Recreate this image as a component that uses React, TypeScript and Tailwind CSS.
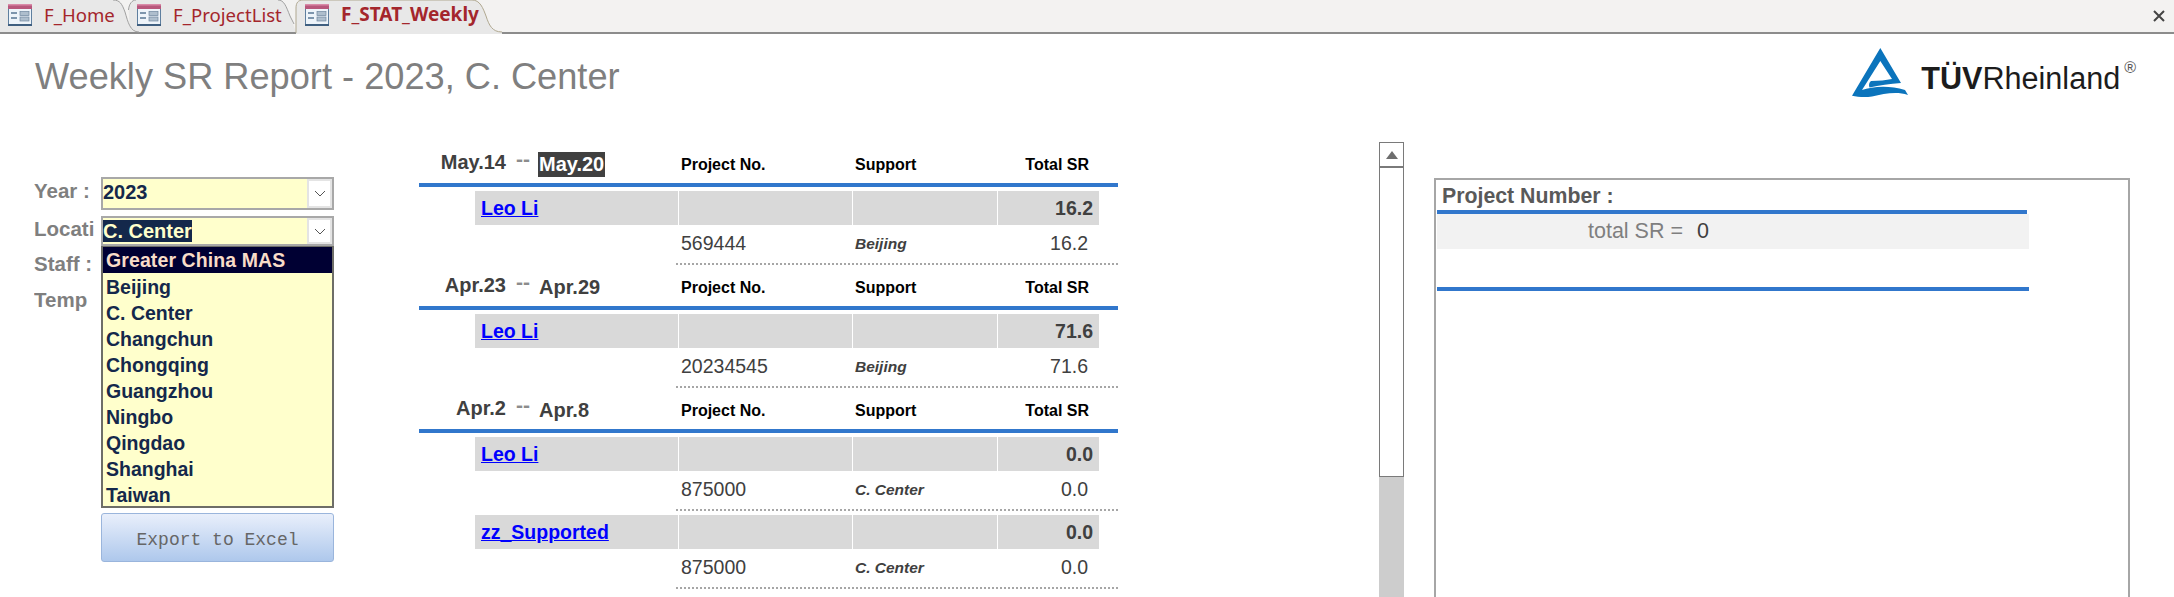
import React from "react";

const arial = "font-['Liberation_Sans',Arial,sans-serif]";

function FormIcon() {
  return (
    <svg width="24" height="22" viewBox="0 0 24 22" className="shrink-0">
      <rect x="0.5" y="0.5" width="23" height="21" fill="#eef4fa" stroke="#5f7f9f" />
      <rect x="0" y="0" width="24" height="5" fill="#b8577c" />
      <rect x="0" y="0" width="24" height="1.5" fill="#d98aa8" />
      <rect x="0" y="20" width="24" height="2" fill="#3f5f80" />
      <rect x="3" y="8" width="6" height="2" fill="#7d95ad" />
      <rect x="3" y="13" width="6" height="2" fill="#7d95ad" />
      <rect x="12" y="7.5" width="9" height="4" fill="#aebecd" stroke="#6f879f" strokeWidth="0.7" />
      <rect x="12" y="13" width="9" height="4" fill="#aebecd" stroke="#6f879f" strokeWidth="0.7" />
    </svg>
  );
}

function Tab({ label, bold, width, iconLeft }: { label: string; bold?: boolean; width: number; iconLeft: number }) {
  return (
    <div
      className="relative z-10 flex h-[32px] items-center gap-[12px] pb-[3px] font-['Noto_Sans',sans-serif] text-[#a4262c]"
      style={{ width, paddingLeft: iconLeft }}
    >
      <FormIcon />
      <span className={bold ? "text-[19px] font-bold" : "text-[18.600px]"}>{label}</span>
    </div>
  );
}

function TabBar() {
  return (
    <div className="relative flex h-[34px] shrink-0 border-b-2 border-[#8c8c8c] bg-[#f3f2f1]">
      <svg width="520" height="34" viewBox="0 0 520 34" className="absolute left-0 top-0">
        <path d="M0 0H113C120 0 122 4 125 12C128 22 130 32 139 32H0Z" fill="#e8e8e8" />
        <path d="M129 32C131 32 128 14 129 8C130 3 132 0 136 0H278C284 0 286 6 290 16L296 32Z" fill="#e8e8e8" />
        <path d="M113 0C120 0 122 4 125 12C128 22 130 32 139 32" fill="none" stroke="#a0a0a0" strokeWidth="1" />
        <path d="M136 0C132 0 129 4 128.500 10" fill="none" stroke="#a0a0a0" strokeWidth="1" />
        <path d="M278 0C284 0 286 6 290 16L294 24" fill="none" stroke="#a0a0a0" strokeWidth="1" />
        <path d="M296 34V8C296 3 298 0 303 0H472C480 0 483 8 486 16C489 25 492 32 502 32V34Z" fill="#e8e8e8" />
        <path d="M296 33V8C296 3 298 0 303 0H472C480 0 483 8 486 16C489 25 492 32 502 32" fill="none" stroke="#b0a890" strokeWidth="1" />
      </svg>
      <Tab label="F_Home" width={129} iconLeft={8} />
      <Tab label="F_ProjectList" width={167} iconLeft={8} />
      <Tab label="F_STAT_Weekly" bold width={200} iconLeft={9} />
      <div className="flex-1" />
      <svg width="14" height="14" viewBox="0 0 14 14" className="relative mr-[8px] mt-[9px]">
        <path d="M2 2L12 12M12 2L2 12" stroke="#444" strokeWidth="2" fill="none" />
      </svg>
    </div>
  );
}

function Logo() {
  return (
    <div className="mr-[38px] mt-[14px] flex items-start">
      <svg width="58" height="50" viewBox="0 0 58 50" className="shrink-0">
        <path
          d="M28.300 0L49 35C38 36 27 37 17.500 39.500C16.500 37 17 34.500 19 33C27 33 34 32 40 31L28.300 13L10 42C20 38.500 37 37 53 42L56 47C44 43 32 46 20 48.500C13 49.500 6 49 0 47.700Z"
          fill="#0b74bc"
        />
      </svg>
      <div className={`${arial} ml-[11px] mt-[13px] flex items-start text-[30.600px] leading-[34px] text-[#1c1c1c]`}>
        <span className="font-bold">TÜV</span>
        <span>Rheinland</span>
        <span className="ml-[4px] mt-[-3px] text-[16px] leading-[20px] text-[#555]">®</span>
      </div>
    </div>
  );
}

function Combo({ value, selected, h }: { value: string; selected?: boolean; h: string }) {
  return (
    <div className={`flex ${h} w-[233px] items-stretch border-2 border-[#a8a8a8] bg-[#ffffcc]`}>
      <div className="flex-1 pt-[1px] text-[20px] font-bold leading-[25px] text-[#14284b]">
        <span className={selected ? "bg-[#14284b] text-[#ffffcc]" : ""}>{value}</span>
      </div>
      <div className="flex w-[25px] items-center justify-center border-2 border-[#e4e4e4] bg-white">
        <svg width="12" height="7" viewBox="0 0 12 7">
          <path d="M1 1L6 6L11 1" stroke="#555" fill="none" />
        </svg>
      </div>
    </div>
  );
}

const locations = ["Beijing", "C. Center", "Changchun", "Chongqing", "Guangzhou", "Ningbo", "Qingdao", "Shanghai", "Taiwan"];

function Left() {
  const label = `w-[66px] overflow-hidden whitespace-nowrap text-[20.500px] font-bold text-[#7f7f7f]`;
  return (
    <div className={`${arial} w-[419px] shrink-0 pl-[34px] pt-[35px]`}>
      <div className="flex h-[39px] gap-px">
        <div className={`${label} leading-[27px]`}>Year :</div>
        <Combo value="2023" h="h-[33px]" />
      </div>
      <div className="relative flex h-[30px] gap-px">
        <div className={`${label} leading-[26px]`}>Locati</div>
        <Combo value="C. Center" selected h="h-[30px]" />
        <div className="absolute left-[67px] top-[30px] z-20 h-[262px] w-[233px] overflow-hidden border-2 border-t border-[#6e6e68] bg-[#ffffcc] text-[19.500px] font-bold text-[#14284b]">
          <div className="h-[26px] bg-[#000033] pl-[3px] leading-[26px] tracking-[0.100px] text-[#f8dcc8]">Greater China MAS</div>
          <div className="h-px" />
          {locations.map((l) => (
            <div key={l} className="h-[26px] pl-[3px] leading-[26px]">
              {l}
            </div>
          ))}
        </div>
      </div>
      <div className={`${label} h-[36px] leading-[36px]`}>Staff :</div>
      <div className={`${label} h-[36px] leading-[36px]`}>Temp</div>
      <div className="ml-[67px] mt-[195px] flex h-[49px] w-[233px] items-center justify-center rounded-[3px] border border-[#9ab5dc] bg-gradient-to-b from-[#e9effb] to-[#aec8ec] pt-[6px] font-['Liberation_Mono',monospace] text-[18px] text-[#666666]">
        Export to Excel
      </div>
    </div>
  );
}

function Header({ from, to, sel }: { from: string; to: string; sel?: boolean }) {
  return (
    <div className="flex h-[41px]">
      <div className="flex w-[262px] text-[20px] font-bold text-[#404040]">
        <div className="w-[87px] pt-[7px] text-right leading-[26px]">{from}</div>
        <div className="w-[32px] pl-[10px] pt-[4px] text-[21px] leading-[26px] text-[#8c8c8c]">--</div>
        <div className="pt-[7px]">
          <span className={`inline-block h-[25px] px-px leading-[25px] ${sel ? "bg-[#404040] text-white" : ""}`}>{to}</span>
        </div>
      </div>
      <div className="flex pt-[11px] text-[16px] font-bold leading-[24px] text-black">
        <div className="w-[174px]">Project No.</div>
        <div className="w-[170px]">Support</div>
        <div className="w-[64px] whitespace-nowrap text-right">Total SR</div>
      </div>
    </div>
  );
}

function Group({ name, total, project, support }: { name: string; total: string; project: string; support: string }) {
  return (
    <div className="mt-[4px]">
      <div className="ml-[56px] flex h-[34px] w-[624px] gap-px text-[19.500px] font-bold leading-[34px]">
        <div className="w-[203px] bg-[#d9d9d9] pl-[6px]">
          <span className="text-[#0000ff] underline">{name}</span>
        </div>
        <div className="w-[173px] bg-[#d9d9d9]" />
        <div className="w-[144px] bg-[#d9d9d9]" />
        <div className="flex-1 bg-[#d9d9d9] pr-[6px] text-right text-[#404040]">{total}</div>
      </div>
      <div className="ml-[257px] flex h-[40px] items-start border-b-2 border-dotted border-[#a6a6a6] pl-[5px] leading-[36px] text-[#404040]">
        <div className="w-[174px] text-[19.500px]">{project}</div>
        <div className="w-[170px] pt-px text-[15.500px] font-bold italic">{support}</div>
        <div className="w-[63px] text-right text-[19.500px]">{total}</div>
      </div>
    </div>
  );
}

function Center() {
  return (
    <div className={`${arial} w-[699px] shrink-0`}>
      <Header from="May.14" to="May.20" sel />
      <div className="h-[4px] bg-[#3177cc]" />
      <Group name="Leo Li" total="16.2" project="569444" support="Beijing" />
      <Header from="Apr.23" to="Apr.29" />
      <div className="h-[4px] bg-[#3177cc]" />
      <Group name="Leo Li" total="71.6" project="20234545" support="Beijing" />
      <Header from="Apr.2" to="Apr.8" />
      <div className="h-[4px] bg-[#3177cc]" />
      <Group name="Leo Li" total="0.0" project="875000" support="C. Center" />
      <Group name="zz_Supported" total="0.0" project="875000" support="C. Center" />
    </div>
  );
}

function Scrollbar() {
  return (
    <div className="ml-[261px] flex h-[455px] w-[25px] shrink-0 flex-col bg-[#cdcdcd]">
      <div className="flex h-[26px] items-center justify-center border border-b-2 border-[#7a7a7a] bg-white">
        <svg width="12" height="8" viewBox="0 0 12 8">
          <path d="M6 0L12 8H0Z" fill="#6e6e6e" />
        </svg>
      </div>
      <div className="h-[309px] border border-t-0 border-[#7a7a7a] bg-white" />
    </div>
  );
}

function Right() {
  return (
    <div className={`${arial} ml-[30px] mt-[36px] h-[500px] w-[696px] shrink-0 border-2 border-[#a6a6a6] bg-white`}>
      <div className="h-[30px] pl-[6px] pt-px text-[21.300px] font-bold leading-[30px] text-[#595959]">Project Number :</div>
      <div className="ml-px h-[4px] w-[590px] bg-[#3177cc]" />
      <div className="ml-px flex h-[35px] w-[592px] bg-[#f2f2f2] text-[21.500px] leading-[34px]">
        <span className="ml-[151px] text-[#7f7f7f]">total SR =</span>
        <span className="ml-[14px] text-[#404040]">0</span>
      </div>
      <div className="ml-px mt-[38px] h-[4px] w-[592px] bg-[#3177cc]" />
    </div>
  );
}

export default function App() {
  return (
    <div className="flex h-[597px] w-[2174px] flex-col overflow-hidden bg-white">
      <TabBar />
      <div className="flex h-[108px] shrink-0 items-start justify-between">
        <div className={`${arial} pl-[35px] pt-[21px] text-[36.200px] leading-[44px] text-[#7f7f7f]`}>
          Weekly SR Report - 2023, C. Center
        </div>
        <Logo />
      </div>
      <div className="flex min-h-0 flex-1 overflow-hidden">
        <Left />
        <Center />
        <Scrollbar />
        <Right />
      </div>
    </div>
  );
}
